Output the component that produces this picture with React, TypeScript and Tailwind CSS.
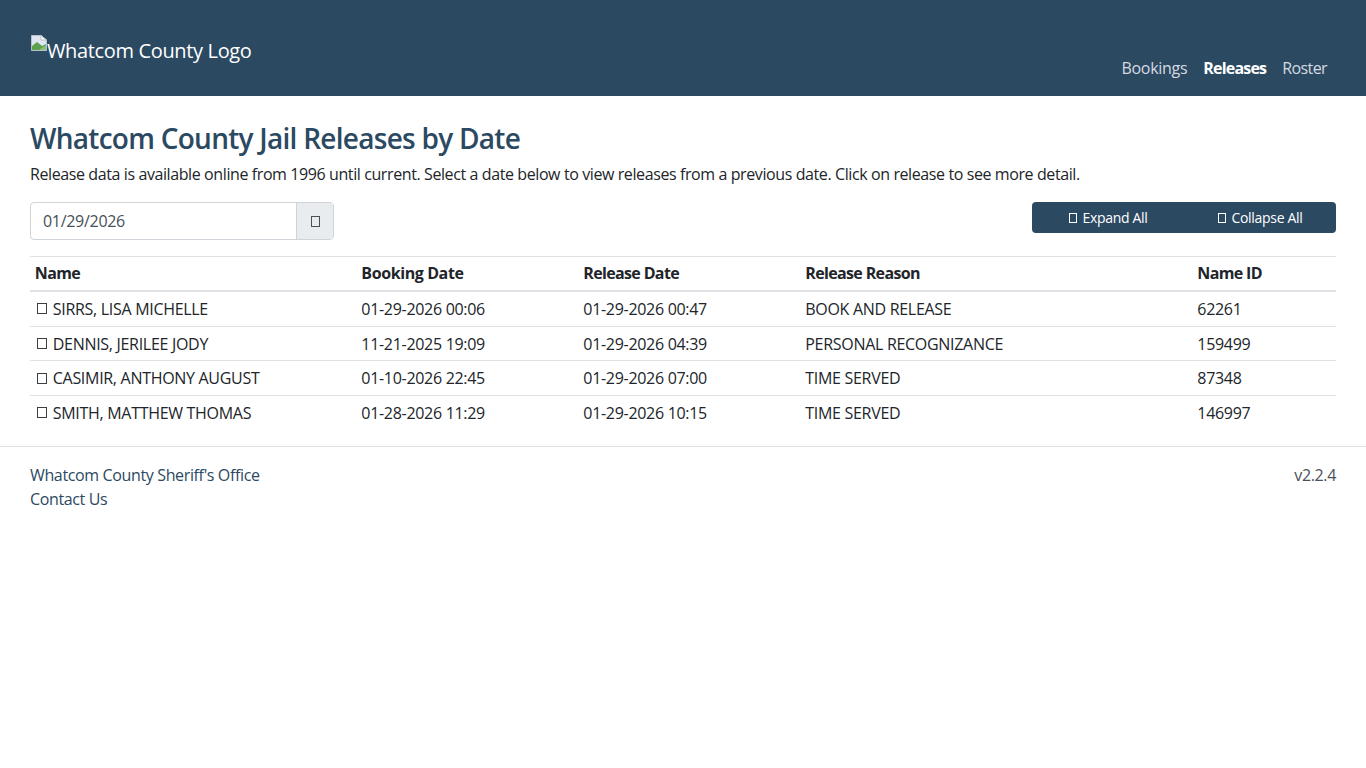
const rows = [
  { name: "SIRRS, LISA MICHELLE", booking: "01-29-2026 00:06", release: "01-29-2026 00:47", reason: "BOOK AND RELEASE", id: "62261" },
  { name: "DENNIS, JERILEE JODY", booking: "11-21-2025 19:09", release: "01-29-2026 04:39", reason: "PERSONAL RECOGNIZANCE", id: "159499" },
  { name: "CASIMIR, ANTHONY AUGUST", booking: "01-10-2026 22:45", release: "01-29-2026 07:00", reason: "TIME SERVED", id: "87348" },
  { name: "SMITH, MATTHEW THOMAS", booking: "01-28-2026 11:29", release: "01-29-2026 10:15", reason: "TIME SERVED", id: "146997" },
];

// missing-glyph box, the icon font did not load in the original
function Tofu({ className }: { className: string }) {
  return <span className={`inline-block border border-current ${className}`} />;
}

function BrokenImage() {
  return (
    <svg width="16" height="16" viewBox="0 0 16 16" className="shrink-0">
      <path d="M0.5 0.5H10L15.5 5V15.5H0.5Z" fill="#dfe6f2" stroke="#b9c0c8" />
      <path d="M10 0.5V5H15.5Z" fill="#fff" stroke="#b9c0c8" />
      <path d="M1 15V11L6 7L11 11L15 9V15Z" fill="#5fa04e" />
      <path d="M8 15L15 10V15Z" fill="#8cc47a" />
    </svg>
  );
}

export default function App() {
  return (
    <div className="min-h-screen bg-white font-['Open_Sans',sans-serif] text-[16px] leading-[24px] tracking-[-0.3px] text-[#212529]">
      {/* Header */}
      <header className="flex h-[96px] items-start justify-between bg-[#2c4962] pl-[31px] pr-[39px]">
        <div className="mt-[35px] flex items-start text-[20px] leading-[30px] tracking-[-0.35px] text-white">
          <BrokenImage />
          <span className="mt-px">Whatcom County Logo</span>
        </div>
        <nav className="mt-[56px] flex gap-[16px] text-[#d5dae0]">
          <a>Bookings</a>
          <a className="font-bold tracking-[-0.8px] text-white">Releases</a>
          <a className="tracking-[-0.6px]">Roster</a>
        </nav>
      </header>

      <main className="px-[30px] pt-[24px]">
        <h1 className="text-[28px] leading-[36px] font-semibold tracking-[-0.73px] text-[#2c4962]">
          Whatcom County Jail Releases by Date
        </h1>
        <p className="mt-[6px] tracking-[-0.4px]">
          Release data is available online from 1996 until current. Select a date below to view releases from a previous date. Click on release to see more detail.
        </p>

        {/* Toolbar */}
        <div className="mt-[16px] flex items-start justify-between">
          <div className="flex h-[38px] w-[304px] rounded border border-[#ced4da]">
            <div className="flex-1 px-3 py-[6px] text-[#495057]">01/29/2026</div>
            <div className="flex w-[37px] items-center justify-center border-l border-[#ced4da] bg-[#e9ecef] text-[#495057]">
              <Tofu className="h-[11px] w-[9px]" />
            </div>
          </div>
          <div className="flex h-[31px] w-[304px] items-center rounded bg-[#2c4962] text-[14px] leading-[21px] text-white">
            <button className="flex w-[153px] items-center justify-center gap-[5px]">
              <Tofu className="h-[10px] w-[8px]" />
              Expand All
            </button>
            <button className="flex w-[151px] items-center justify-center gap-[5px]">
              <Tofu className="h-[10px] w-[8px]" />
              Collapse All
            </button>
          </div>
        </div>

        {/* Releases table */}
        <table className="mt-[16px] w-full table-fixed border-collapse">
          <thead>
            <tr className="border-t border-b-2 border-t-[#dee2e6] border-b-[#dee2e6] text-left tracking-[-0.65px]">
              <th className="w-[326.5px] px-[4.8px] pt-[4px] pb-[5.2px] font-bold">Name</th>
              <th className="w-[222px] px-[4.8px] pt-[4px] pb-[5.2px] font-bold tracking-[-0.4px]">Booking Date</th>
              <th className="w-[222px] px-[4.8px] pt-[4px] pb-[5.2px] font-bold">Release Date</th>
              <th className="w-[392px] px-[4.8px] pt-[4px] pb-[5.2px] font-bold">Release Reason</th>
              <th className="px-[4.8px] pt-[4px] pb-[5.2px] font-bold">Name ID</th>
            </tr>
          </thead>
          <tbody>
            {rows.map((row, i) => (
              <tr key={row.id} className={i > 0 ? "border-t border-[#dee2e6]" : ""}>
                <td className="p-[4.8px]">
                  <span className="flex items-center gap-[6px] pl-[2px]">
                    <Tofu className="h-[11px] w-[10px] text-[#3a3f44]" />
                    {row.name}
                  </span>
                </td>
                <td className="p-[4.8px]">{row.booking}</td>
                <td className="p-[4.8px]">{row.release}</td>
                <td className="p-[4.8px]">{row.reason}</td>
                <td className="p-[4.8px]">{row.id}</td>
              </tr>
            ))}
          </tbody>
        </table>
      </main>

      {/* Footer */}
      <footer className="mt-[16.4px] flex justify-between border-t border-[#dee2e6] px-[30px] pt-[16px] tracking-[-0.36px] text-[#2c4962]">
        <div>
          <div>Whatcom County Sheriff's Office</div>
          <div>Contact Us</div>
        </div>
        <div className="text-[#495057]">v2.2.4</div>
      </footer>
    </div>
  );
}
